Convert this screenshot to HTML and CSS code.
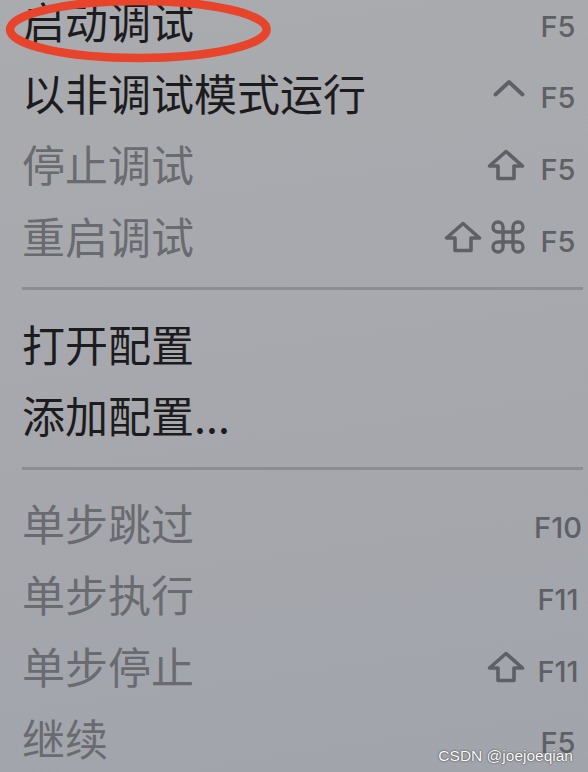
FILE: index.html
```html
<!DOCTYPE html>
<html lang="zh-CN">
<head>
<meta charset="utf-8">
<title>调试菜单</title>
<link rel="stylesheet" href="styles.css">
</head>
<body>
<div class="menu">
  <div class="item on"><span class="label">启动调试</span><span class="mods"></span><span class="key">F5</span></div>
  <div class="item on"><span class="label">以非调试模式运行</span><span class="mods"><svg class="caret" viewBox="0 0 32 18"><polyline points="2.5,15.5 16,3 29.5,15.5"/></svg></span><span class="key">F5</span></div>
  <div class="item"><span class="label">停止调试</span><span class="mods"><svg class="shift" viewBox="0 0 38 32"><path d="M19 2.5 L35.5 17 H27 V29.5 H11 V17 H2.5 Z"/></svg></span><span class="key">F5</span></div>
  <div class="item"><span class="label">重启调试</span><span class="mods"><svg class="shift" viewBox="0 0 38 32"><path d="M19 2.5 L35.5 17 H27 V29.5 H11 V17 H2.5 Z"/></svg><svg class="cmd" viewBox="-2 -2 34 34"><path d="M10 5 A5 5 0 1 0 5 10 H25 A5 5 0 1 0 20 5 V25 A5 5 0 1 0 25 20 H5 A5 5 0 1 0 10 25 Z"/></svg></span><span class="key">F5</span></div>
  <div class="sep"></div>
  <div class="item on"><span class="label">打开配置</span></div>
  <div class="item on"><span class="label">添加配置...</span></div>
  <div class="sep"></div>
  <div class="item"><span class="label">单步跳过</span><span class="mods"></span><span class="key">F10</span></div>
  <div class="item"><span class="label">单步执行</span><span class="mods"></span><span class="key">F11</span></div>
  <div class="item"><span class="label">单步停止</span><span class="mods"><svg class="shift" viewBox="0 0 38 32"><path d="M19 2.5 L35.5 17 H27 V29.5 H11 V17 H2.5 Z"/></svg></span><span class="key">F11</span></div>
  <div class="item"><span class="label">继续</span><span class="mods"></span><span class="key">F5</span></div>
</div>
<svg class="ring" viewBox="0 0 288 72"><ellipse cx="138.3" cy="29.5" rx="128.3" ry="28.5"/></svg>
<div class="watermark">CSDN @joejoeqian</div>
</body>
</html>
```
FILE: styles.css
```css
html, body {
  margin: 0;
  padding: 0;
}
body {
  width: 588px;
  height: 772px;
  overflow: hidden;
  position: relative;
  background: linear-gradient(172deg, #aaabaf 0%, #a6a8ad 50%, #a1a4ab 100%);
  font-family: "Noto Sans CJK SC", "Noto Sans", sans-serif;
}
.menu {
  margin-top: -13.85px;
  display: flex;
  flex-direction: column;
}
.item {
  height: 71.7px;
  display: flex;
  align-items: center;
  padding: 0 5px 0 22px;
  box-sizing: border-box;
}
.label {
  flex: 1;
  font-size: 43px;
  line-height: 1;
  color: #696b70;
  padding-bottom: 3px;
  white-space: nowrap;
}
.item.on .label {
  color: #1c1c1e;
}
.mods {
  display: flex;
  align-items: center;
  gap: 9px;
  margin-right: 8px;
}
.mods svg {
  fill: none;
  stroke: #5e6065;
  stroke-linejoin: round;
  stroke-linecap: round;
}
.caret {
  width: 32px;
  height: 18px;
  stroke-width: 3.8;
  margin-bottom: 12px;
}
.shift {
  width: 38px;
  height: 32px;
  stroke-width: 3.6;
}
.cmd {
  width: 34px;
  height: 34px;
  stroke-width: 3.4;
}
.key {
  width: 50px;
  text-align: center;
  font-family: Inter, "Liberation Sans", sans-serif;
  font-weight: 500;
  font-size: 29px;
  line-height: 1;
  color: #5e6065;
  padding-top: 8px;
}
.sep {
  height: 35.8px;
  padding-top: 14.5px;
  box-sizing: border-box;
}
.sep::before {
  content: "";
  display: block;
  height: 3px;
  margin: 0 5px 0 22px;
  background: #8b8d93;
}
.ring {
  position: absolute;
  left: 0;
  top: 0;
  width: 288px;
  height: 72px;
  fill: none;
  stroke: #e8432b;
  stroke-width: 8.5;
}
.watermark {
  position: absolute;
  right: 15px;
  bottom: 9px;
  font-family: "Liberation Sans", Arial, sans-serif;
  font-size: 15.5px;
  line-height: 1;
  color: #ffffff;
  text-shadow: 0 0 1px #333, 0 0 2px #555;
}
```
